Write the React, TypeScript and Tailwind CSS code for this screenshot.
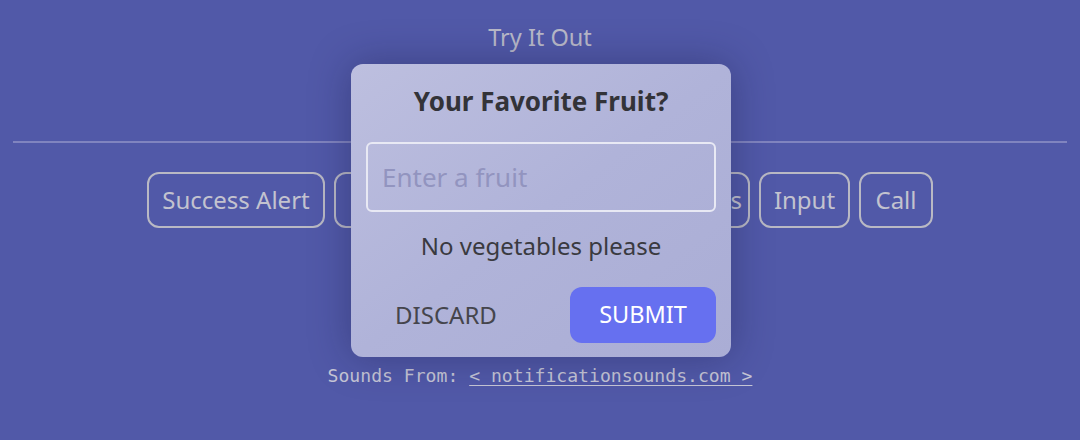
import React from "react";

const btn =
  "h-[56px] rounded-[12px] border-2 border-[#b9b9c4] text-[24px] text-[#c3c3cf] flex items-center justify-center whitespace-nowrap overflow-hidden";

export default function App() {
  return (
    <div
      className="relative w-[1080px] h-[440px] bg-[#5159a8] overflow-hidden"
      style={{ fontFamily: '"Noto Sans", "Open Sans", sans-serif' }}
    >
      <div className="flex flex-col items-center">
        <div className="mt-[21px] h-[32px] text-[23.5px] leading-[32px] text-[#b9b9c8]">Try It Out</div>
        <div className="mt-[88px] w-[1054px] h-[2px] bg-[#8084bf]" />
        <div className="mt-[29px] flex gap-[9px]">
          <div className={`${btn} w-[178px]`}>Success Alert</div>
          <div className={`${btn} w-[170px]`}>Error Alert</div>
          <div className={`${btn} w-[237px] justify-end pr-[6px]`}>Notifications</div>
          <div className={`${btn} w-[91px]`}>Input</div>
          <div className={`${btn} w-[74px]`}>Call</div>
        </div>
        <div
          className="mt-[136px] text-[18.1px] leading-[24px] text-[#c6c6d6] whitespace-pre"
          style={{ fontFamily: '"DejaVu Sans Mono", "Liberation Mono", monospace' }}
        >
          Sounds From: <span className="underline underline-offset-[3px]">&lt; notificationsounds.com &gt;</span>
        </div>
      </div>

      <div className="absolute left-[351px] top-[64px] w-[380px] h-[293px] rounded-[12px] bg-gradient-to-br from-[#bdbfdf] via-[#b0b3d9] to-[#aaadd5] shadow-[0_0_40px_rgba(20,20,60,0.35)] px-[15px] pt-[21px] pb-[14px] flex flex-col">
        <div className="h-[32px] text-center text-[26px] leading-[32px] font-bold text-[#333338]">
          Your Favorite Fruit?
        </div>
        <div className="mt-[25px] h-[70px] rounded-[6px] border-2 border-[#e8e9f4] flex items-center px-[14px] text-[26px] text-[#9294bf]">
          Enter a fruit
        </div>
        <div className="mt-[19px] h-[30px] text-center text-[24px] leading-[30px] text-[#3a3a40]">
          No vegetables please
        </div>
        <div className="mt-[26px] flex items-center">
          <div className="w-[160px] h-[56px] flex items-center justify-center text-[24px] text-[#45454c]">DISCARD</div>
          <div className="ml-auto w-[146px] h-[56px] rounded-[12px] bg-[#6670f0] flex items-center justify-center text-[23.5px] text-white">
            SUBMIT
          </div>
        </div>
      </div>
    </div>
  );
}
